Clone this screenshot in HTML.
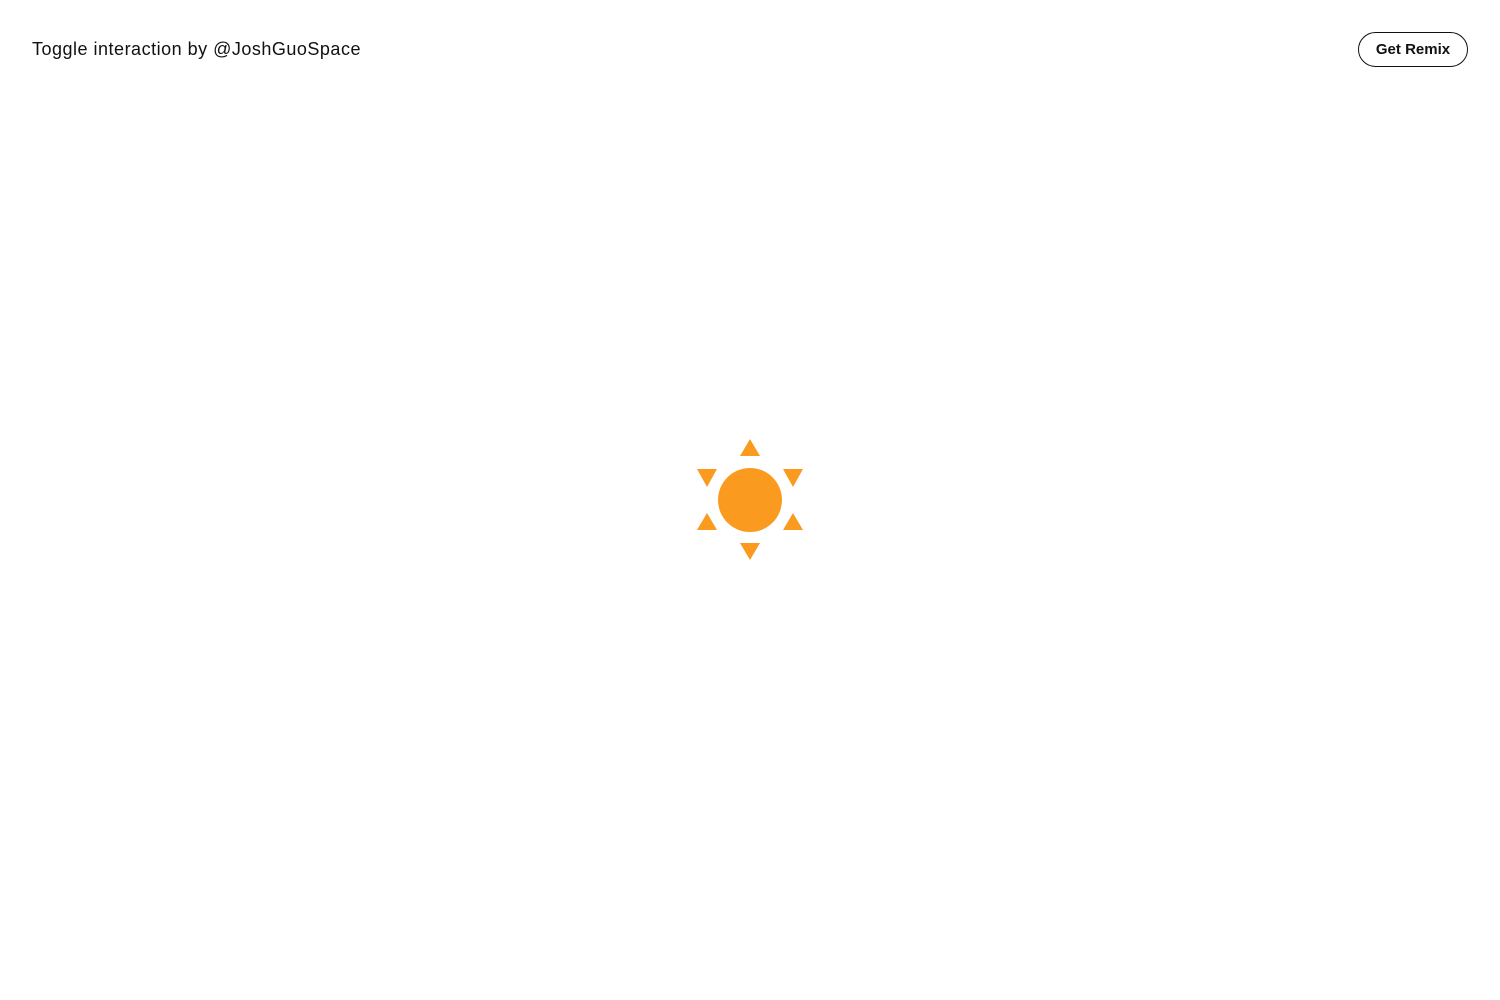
<!DOCTYPE html>
<html><head><style>
body{margin:0;width:1500px;height:1000px;background:#fff;font-family:"Liberation Sans",sans-serif;position:relative;overflow:hidden}
.t{position:absolute;left:32px;top:39px;font-size:18px;letter-spacing:0.5px;color:#111}
.b{position:absolute;left:1358px;top:32px;width:108px;height:33px;border:1px solid #111;border-radius:18px;box-sizing:content-box;font-size:15px;font-weight:bold;text-align:center;line-height:34px;color:#111}
svg{position:absolute;left:0;top:0}
</style></head><body>
<div class="t">Toggle interaction by @JoshGuoSpace</div>
<div class="b">Get Remix</div>
<svg width="1500" height="1000"><g fill="#FA9A1F">
<circle cx="750" cy="500" r="32"/>
<polygon points="740,456 760,456 750,439"/>
<polygon points="740,543 760,543 750,560"/>
<polygon points="697,469 717,469 707,487"/>
<polygon points="783,469 803,469 793,487"/>
<polygon points="697,530 717,530 707,513"/>
<polygon points="783,530 803,530 793,513"/>
</g></svg>
</body></html>
